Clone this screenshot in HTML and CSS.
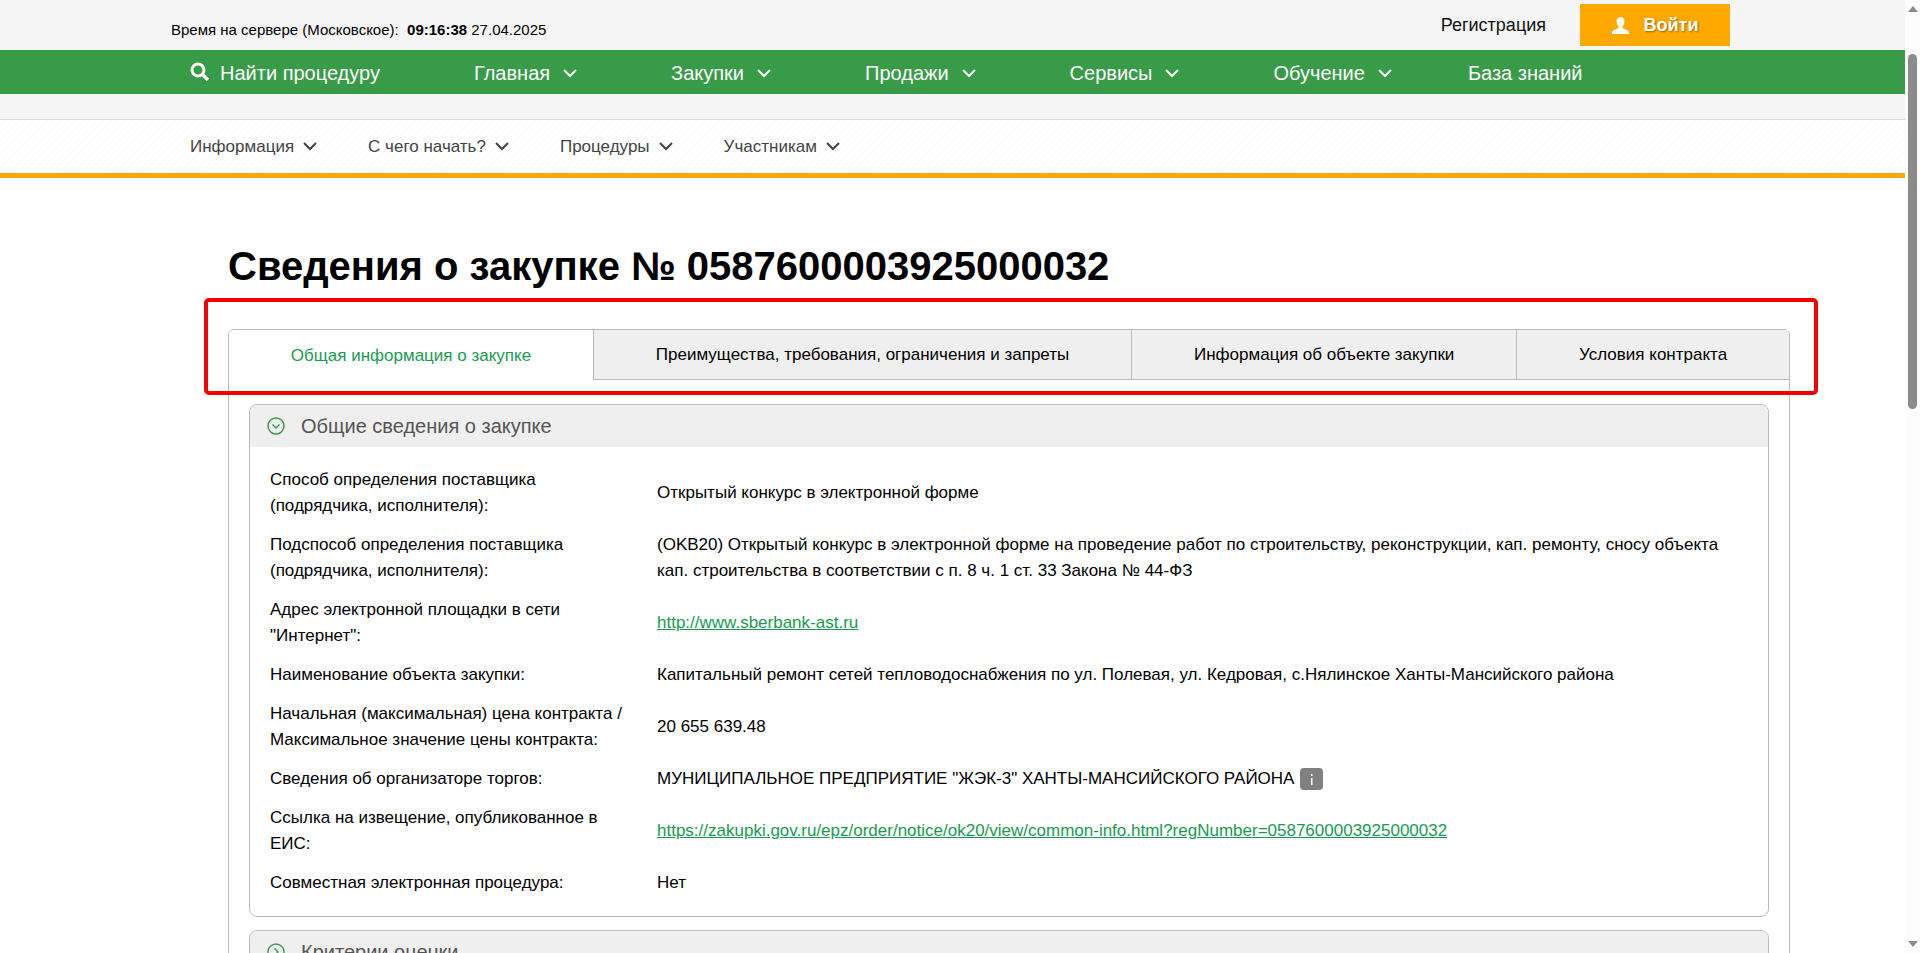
FILE: index.html
```html
<!DOCTYPE html>
<html lang="ru">
<head>
    <meta charset="UTF-8">
    <meta name="viewport" content="width=device-width, initial-scale=1.0">
    <title>Сведения о закупке № 0587600003925000032</title>
    <link rel="stylesheet" href="styles.css">
</head>
<body>
    <svg class="sprite" aria-hidden="true">
        <symbol id="chevron" viewBox="0 0 14 9"><path d="M1 1l6 6 6-6" fill="none" stroke="currentColor" stroke-width="2"/></symbol>
    </svg>

    <div class="page">
        <header>
            <div class="topbar">
                <div class="clock">Время на сервере (Московское):&nbsp; <b>09:16:38</b> 27.04.2025</div>
                <div class="account">
                    <a href="#">Регистрация</a>
                    <button type="button" class="login">
                        <svg width="17" height="17" viewBox="0 0 17 17"><path d="M8.500 0C6 0 4.500 1.700 4.500 4.300c0 2 .8 3.900 1.900 5v1.900C4 12.200 0 13 0 15.500V17h17v-1.500c0-2.500-4-3.300-6.400-4.300V9.300c1.100-1.100 1.900-3 1.900-5C12.500 1.700 11 0 8.500 0z" fill="#fff"/></svg>
                        Войти
                    </button>
                </div>
            </div>

            <nav class="main-nav">
                <a href="#" class="search">
                    <svg width="20" height="22" viewBox="0 0 20 22"><circle cx="8" cy="8" r="6" fill="none" stroke="#fff" stroke-width="3"/><path d="M12.500 12.500l5.500 5.500" stroke="#fff" stroke-width="3.500"/></svg>
                    Найти процедуру
                </a>
                <a href="#">Главная <svg width="14" height="9"><use href="#chevron"/></svg></a>
                <a href="#">Закупки <svg width="14" height="9"><use href="#chevron"/></svg></a>
                <a href="#">Продажи <svg width="14" height="9"><use href="#chevron"/></svg></a>
                <a href="#">Сервисы <svg width="14" height="9"><use href="#chevron"/></svg></a>
                <a href="#" class="before-last">Обучение <svg width="14" height="9"><use href="#chevron"/></svg></a>
                <a href="#">База знаний</a>
            </nav>

            <nav class="sub-nav">
                <a href="#">Информация <svg width="14" height="9"><use href="#chevron"/></svg></a>
                <a href="#">С чего начать? <svg width="14" height="9"><use href="#chevron"/></svg></a>
                <a href="#">Процедуры <svg width="14" height="9"><use href="#chevron"/></svg></a>
                <a href="#">Участникам <svg width="14" height="9"><use href="#chevron"/></svg></a>
            </nav>
        </header>

        <main>
            <h1>Сведения о закупке № 0587600003925000032</h1>

            <div class="card">
                <div class="tabs" role="tablist">
                    <button type="button" class="tab active" role="tab" aria-selected="true">Общая информация о закупке</button>
                    <button type="button" class="tab" role="tab">Преимущества, требования, ограничения и запреты</button>
                    <button type="button" class="tab" role="tab">Информация об объекте закупки</button>
                    <button type="button" class="tab" role="tab">Условия контракта</button>
                </div>

                <section class="panel">
                    <h2>
                        <svg width="18" height="18" viewBox="0 0 18 18"><circle cx="9" cy="9" r="8" fill="none" stroke="#379b47" stroke-width="1.400"/><path d="M5.500 7.500L9 11l3.500-3.500" fill="none" stroke="#379b47" stroke-width="1.400"/></svg>
                        Общие сведения о закупке
                    </h2>
                    <table>
                        <tr>
                            <th scope="row">Способ определения поставщика (подрядчика, исполнителя):</th>
                            <td>Открытый конкурс в электронной форме</td>
                        </tr>
                        <tr>
                            <th scope="row">Подспособ определения поставщика (подрядчика, исполнителя):</th>
                            <td>(OKB20) Открытый конкурс в электронной форме на проведение работ по строительству, реконструкции, кап. ремонту, сносу объекта<br>кап. строительства в соответствии с п. 8 ч. 1 ст. 33 Закона № 44-ФЗ</td>
                        </tr>
                        <tr>
                            <th scope="row">Адрес электронной площадки в сети "Интернет":</th>
                            <td><a href="#">http://www.sberbank-ast.ru</a></td>
                        </tr>
                        <tr>
                            <th scope="row">Наименование объекта закупки:</th>
                            <td>Капитальный ремонт сетей тепловодоснабжения по ул. Полевая, ул. Кедровая, с.Нялинское Ханты-Мансийского района</td>
                        </tr>
                        <tr>
                            <th scope="row">Начальная (максимальная) цена контракта / Максимальное значение цены контракта:</th>
                            <td>20 655 639.48</td>
                        </tr>
                        <tr>
                            <th scope="row">Сведения об организаторе торгов:</th>
                            <td>
                                <div class="organizer">
                                    МУНИЦИПАЛЬНОЕ ПРЕДПРИЯТИЕ "ЖЭК-3" ХАНТЫ-МАНСИЙСКОГО РАЙОНА
                                    <button type="button" class="info" aria-label="Информация об организаторе">
                                        <svg width="23" height="22" viewBox="0 0 23 22"><path d="M11 6h1.500v2H11zM11 10h1.500v7H11z" fill="#fff"/></svg>
                                    </button>
                                </div>
                            </td>
                        </tr>
                        <tr>
                            <th scope="row">Ссылка на извещение, опубликованное в ЕИС:</th>
                            <td><a href="#">https://zakupki.gov.ru/epz/order/notice/ok20/view/common-info.html?regNumber=0587600003925000032</a></td>
                        </tr>
                        <tr>
                            <th scope="row">Совместная электронная процедура:</th>
                            <td>Нет</td>
                        </tr>
                    </table>
                </section>

                <section class="panel">
                    <h2>
                        <svg width="18" height="18" viewBox="0 0 18 18"><circle cx="9" cy="9" r="8" fill="none" stroke="#379b47" stroke-width="1.400"/><path d="M7.500 5.500L11 9l-3.500 3.500" fill="none" stroke="#379b47" stroke-width="1.400"/></svg>
                        Критерии оценки
                    </h2>
                </section>

                <div class="highlight"></div>
            </div>
        </main>
    </div>

    <div class="scrollbar">
        <svg width="10" height="6" viewBox="0 0 10 6"><path d="M5 0l5 6H0z" fill="#8b8b8b"/></svg>
        <div class="track"><div class="thumb"></div></div>
        <svg width="10" height="6" viewBox="0 0 10 6"><path d="M0 0h10L5 6z" fill="#8b8b8b"/></svg>
    </div>
</body>
</html>
```
FILE: styles.css
```css
* {
    box-sizing: border-box;
}

body {
    margin: 0;
    height: 100vh;
    display: flex;
    overflow: hidden;
    font-family: "Liberation Sans", Arial, sans-serif;
    font-size: 18px;
    color: #000;
    background: #fff;
}

button {
    font-family: inherit;
    border: none;
    cursor: pointer;
}

.sprite {
    display: none;
}

.page {
    flex: 1;
    overflow: hidden;
}

/* header */
header {
    background: #f5f5f5;
}

header a {
    text-decoration: none;
}

.topbar {
    display: flex;
    justify-content: space-between;
    height: 50px;
    padding: 4px 175px 4px 171px;
}

.clock {
    padding-top: 17px;
    font-size: 15px;
    line-height: 18px;
}

.account {
    display: flex;
    align-items: center;
    gap: 34px;
}

.account a {
    color: #111;
}

.login {
    display: flex;
    align-items: center;
    justify-content: center;
    gap: 15px;
    width: 150px;
    height: 42px;
    background: #ffa800;
    color: #fff;
    font-size: 18px;
    font-weight: bold;
    text-shadow: 1px 1px 2px #9a6a00;
}

.main-nav {
    display: flex;
    gap: 94px;
    padding: 2px 0 0 190px;
    background: #379b47;
    font-size: 20px;
    line-height: 42px;
}

.main-nav a {
    display: flex;
    align-items: center;
    gap: 13px;
    color: #fff;
    white-space: nowrap;
}

.main-nav .search {
    gap: 10px;
}

.main-nav .before-last {
    margin-right: -18px;
}

.sub-nav {
    display: flex;
    gap: 51px;
    margin-top: 25px;
    padding-left: 190px;
    border-top: 1px solid #ddd;
    border-bottom: 5px solid #faa80f;
    background: repeating-linear-gradient(135deg, #fff 0, #fff 3px, #fcfcfc 3px, #fcfcfc 5px);
    font-size: 17px;
    line-height: 53px;
}

.sub-nav a {
    display: flex;
    align-items: center;
    gap: 9px;
    color: #444;
}

/* content */
main {
    margin: 0 115px 0 228px;
}

h1 {
    margin: 64px 0 39px;
    font-size: 40px;
    line-height: 48px;
}

.card {
    position: relative;
    padding-bottom: 20px;
    border: 1px solid #bbb;
    border-radius: 6px;
}

.tabs {
    display: flex;
}

.tab {
    flex: 1 1 auto;
    height: 50px;
    padding-top: 2px;
    border-left: 1px solid #bbb;
    border-bottom: 1px solid #bbb;
    background: #efefef;
    color: #000;
    font-size: 17px;
}

.tab:last-child {
    border-top-right-radius: 5px;
}

.tab.active {
    border: none;
    border-top-left-radius: 5px;
    background: #fff;
    color: #1a9b52;
}

.panel {
    margin: 24px 20px 0;
    border: 1px solid #bbb;
    border-radius: 8px;
    overflow: hidden;
}

.panel + .panel {
    margin-top: 13px;
}

.panel h2 {
    display: flex;
    align-items: center;
    gap: 16px;
    margin: 0;
    padding-left: 17px;
    background: #efefef;
    color: #555;
    font-size: 20px;
    font-weight: normal;
    line-height: 42px;
}

.panel table {
    width: 100%;
    margin: 14px 0 13px;
    border-collapse: collapse;
    font-size: 17px;
    line-height: 26px;
}

.panel th,
.panel td {
    padding: 6px 0 7px 20px;
    text-align: left;
    font-weight: normal;
}

.panel th {
    width: 387px;
}

.panel td a {
    color: #1a9b52;
}

.organizer {
    display: flex;
    align-items: center;
    gap: 6px;
}

.info {
    display: flex;
    padding: 0;
    border-radius: 4px;
    background: #808080;
}

/* red frame around the tabs */
.highlight {
    position: absolute;
    top: -32px;
    left: -25px;
    right: -29px;
    height: 97px;
    border: 4px solid #f50000;
    border-radius: 5px;
    pointer-events: none;
}

/* scrollbar */
.scrollbar {
    display: flex;
    flex-direction: column;
    align-items: center;
    width: 15px;
    padding: 6px 0;
    background: #fcfcfc;
}

.track {
    flex: 1;
    width: 9px;
    padding-top: 42px;
}

.thumb {
    height: 40%;
    border-radius: 5px;
    background: #8b8b8b;
}
```
